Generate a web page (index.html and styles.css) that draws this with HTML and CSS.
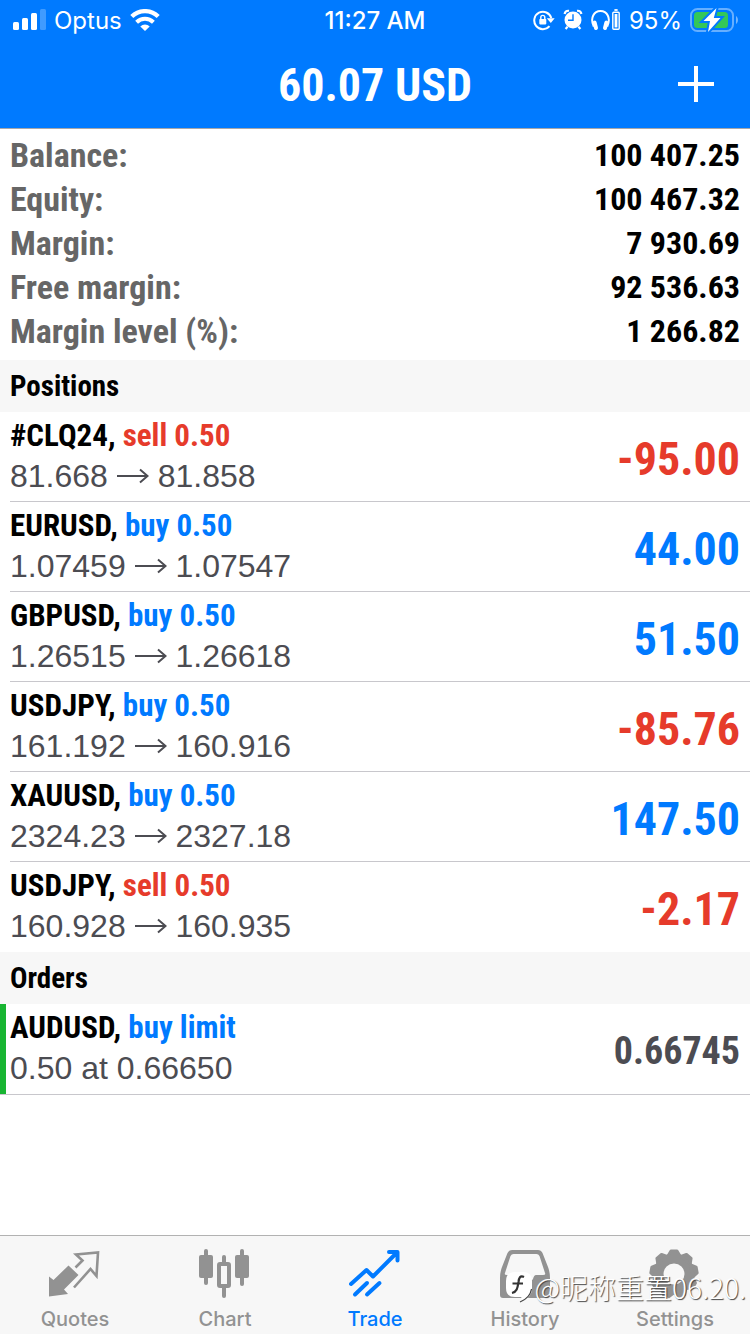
FILE: index.html
```html
<!DOCTYPE html>
<html lang="en">
  <head>
    <meta charset="UTF-8" />
    <meta name="viewport" content="width=device-width, initial-scale=1.0" />
    <title>Trade</title>
    <link rel="stylesheet" href="styles.css">
  </head>
  <body>
    <header class="header">
      <!-- Status bar -->
      <div class="status-bar">
        <div class="status-left">
          <svg width="34" height="22" viewBox="0 0 34 22" fill="#fff">
            <rect x="1" y="13" width="6" height="8" rx="1.5" />
            <rect x="10" y="9" width="6" height="12" rx="1.5" />
            <rect x="19" y="4" width="6" height="17" rx="1.5" />
            <rect x="28" y="0" width="6" height="21" rx="1.5" opacity="0.25" />
          </svg>
          <span>Optus</span>
          <svg width="30" height="22" viewBox="0 0 30 22" fill="none" stroke="#fff" stroke-width="4.4">
            <path d="M1.8 7.5 A19 19 0 0 1 28.2 7.5" />
            <path d="M6.6 13.3 A12 12 0 0 1 23.4 13.3" stroke-width="4" />
            <path d="M15 22 L10.3 17.4 A7 7 0 0 1 19.7 17.4 Z" fill="#fff" stroke="none" />
          </svg>
        </div>
        <div class="status-time">11:27 AM</div>
        <div class="status-right">
          <svg width="22" height="22" viewBox="0 0 22 22" fill="none" stroke="#fff" stroke-width="2">
            <path d="M16.5 17.2 A8.7 8.7 0 1 1 18.3 9" />
            <path d="M13.8 9.3 H21.7 L17.8 14 Z" fill="#fff" stroke="none" />
            <rect x="6.3" y="10" width="7" height="5.4" rx="0.8" fill="#fff" stroke="none" />
            <path d="M7.8 10.5 V8.4 a2 2 0 0 1 4 0 V10.5" stroke-width="1.4" />
          </svg>
          <svg width="20" height="22" viewBox="0 0 20 22">
            <circle cx="10" cy="11" r="8.5" fill="#fff" />
            <path d="M1.6 5 A4 4 0 0 1 6 1.8 M14 1.8 A4 4 0 0 1 18.4 5 M4.6 17.6 L2.6 20 M15.4 17.6 L17.4 20" fill="none" stroke="#fff" stroke-width="2.2" />
            <path d="M10 5.2 V11.2 H5" fill="none" stroke="#007aff" stroke-width="1.4" />
          </svg>
          <svg width="30" height="22" viewBox="0 0 30 22" fill="none" stroke="#fff">
            <path d="M2.8 17.6 C-1.4 8.5 3.2 2.1 9.5 2.1 S20.4 8.5 16.2 17.6" stroke-width="2" />
            <path d="M3.6 13.6 L5 19 M15.4 13.6 L14 19" stroke-width="4" stroke-linecap="round" />
            <rect x="21.8" y="3.2" width="6.4" height="17" rx="1" stroke-width="1.4" />
            <path d="M23.4 1 H26.6" stroke-width="1.8" />
            <rect x="23.6" y="5" width="2.8" height="13.4" fill="#fff" stroke="none" />
          </svg>
          <span>95%</span>
          <svg width="48" height="24" viewBox="0 0 48 24">
            <rect x="1" y="1" width="42" height="22" rx="6.5" fill="none" stroke="#fff" stroke-opacity="0.4" stroke-width="2" />
            <path d="M46 8 C48.6 9.4 48.6 14.6 46 16 Z" fill="#fff" opacity="0.45" />
            <rect x="4" y="4" width="34" height="16" rx="3.5" fill="#34c759" />
            <path d="M26.5 0 L13.5 13 H20 L18 24 L30.5 10 H23.8 Z" fill="#fff" stroke="#007aff" stroke-width="4" paint-order="stroke" />
          </svg>
        </div>
      </div>

      <div class="title-bar">
        <h1>60.07 USD</h1>
        <button class="add-button" type="button" aria-label="New order">
          <svg width="36" height="36" viewBox="0 0 36 36" stroke="#fff" stroke-width="4">
            <path d="M18 0 V36 M0 18 H36" />
          </svg>
        </button>
      </div>
    </header>

    <main class="content">
      <!-- Account summary -->
      <dl class="account">
        <div class="account-row"><dt>Balance:</dt><dd>100 407.25</dd></div>
        <div class="account-row"><dt>Equity:</dt><dd>100 467.32</dd></div>
        <div class="account-row"><dt>Margin:</dt><dd>7 930.69</dd></div>
        <div class="account-row"><dt>Free margin:</dt><dd>92 536.63</dd></div>
        <div class="account-row"><dt>Margin level (%):</dt><dd>1 266.82</dd></div>
      </dl>

      <h2 class="section-title">Positions</h2>
      <ul class="trade-list">
        <li class="trade">
          <div class="trade-info">
            <p class="trade-symbol">#CLQ24, <span class="sell">sell 0.50</span></p>
            <p class="trade-price">81.668 <svg class="arrow" viewBox="0 0 32 16"><path d="M0 8 H30 M23 1.5 L30.5 8 L23 14.5" /></svg> 81.858</p>
          </div>
          <span class="trade-value sell">-95.00</span>
        </li>
        <li class="trade">
          <div class="trade-info">
            <p class="trade-symbol">EURUSD, <span class="buy">buy 0.50</span></p>
            <p class="trade-price">1.07459 <svg class="arrow" viewBox="0 0 32 16"><path d="M0 8 H30 M23 1.5 L30.5 8 L23 14.5" /></svg> 1.07547</p>
          </div>
          <span class="trade-value buy">44.00</span>
        </li>
        <li class="trade">
          <div class="trade-info">
            <p class="trade-symbol">GBPUSD, <span class="buy">buy 0.50</span></p>
            <p class="trade-price">1.26515 <svg class="arrow" viewBox="0 0 32 16"><path d="M0 8 H30 M23 1.5 L30.5 8 L23 14.5" /></svg> 1.26618</p>
          </div>
          <span class="trade-value buy">51.50</span>
        </li>
        <li class="trade">
          <div class="trade-info">
            <p class="trade-symbol">USDJPY, <span class="buy">buy 0.50</span></p>
            <p class="trade-price">161.192 <svg class="arrow" viewBox="0 0 32 16"><path d="M0 8 H30 M23 1.5 L30.5 8 L23 14.5" /></svg> 160.916</p>
          </div>
          <span class="trade-value sell">-85.76</span>
        </li>
        <li class="trade">
          <div class="trade-info">
            <p class="trade-symbol">XAUUSD, <span class="buy">buy 0.50</span></p>
            <p class="trade-price">2324.23 <svg class="arrow" viewBox="0 0 32 16"><path d="M0 8 H30 M23 1.5 L30.5 8 L23 14.5" /></svg> 2327.18</p>
          </div>
          <span class="trade-value buy">147.50</span>
        </li>
        <li class="trade">
          <div class="trade-info">
            <p class="trade-symbol">USDJPY, <span class="sell">sell 0.50</span></p>
            <p class="trade-price">160.928 <svg class="arrow" viewBox="0 0 32 16"><path d="M0 8 H30 M23 1.5 L30.5 8 L23 14.5" /></svg> 160.935</p>
          </div>
          <span class="trade-value sell">-2.17</span>
        </li>
      </ul>

      <h2 class="section-title">Orders</h2>
      <ul class="order-list">
        <li class="trade order">
          <div class="trade-info">
            <p class="trade-symbol">AUDUSD, <span class="buy">buy limit</span></p>
            <p class="trade-price">0.50 at 0.66650</p>
          </div>
          <span class="trade-value order-value">0.66745</span>
        </li>
      </ul>
    </main>

    <!-- Tab bar -->
    <nav class="tab-bar">
      <a class="tab" href="#quotes">
        <svg width="52" height="50" viewBox="0 0 52 50">
          <path d="M0 27.5 L4.5 31 L19.5 16.5 L29.5 26 L15 40.5 L19 45 L0 47.5 Z" fill="currentColor" />
          <path d="M26.5 18.5 L33.5 11.5 L27 5.5 L49 3.5 L47.5 27 L41.5 20 L25 38.5" fill="none" stroke="currentColor" stroke-width="2.6" />
        </svg>
        <span>Quotes</span>
      </a>
      <a class="tab" href="#chart">
        <svg width="52" height="50" viewBox="0 0 52 50" fill="currentColor">
          <rect x="0" y="6" width="14" height="23" rx="2" />
          <rect x="5" y="0" width="4" height="36" rx="2" />
          <rect x="36" y="6" width="14" height="23" rx="2" />
          <rect x="41" y="0" width="4" height="37" rx="2" />
          <rect x="23" y="6" width="4" height="9" rx="2" />
          <rect x="23" y="37" width="4" height="12" rx="2" />
          <rect x="20" y="15" width="10" height="22" rx="1" fill="none" stroke="currentColor" stroke-width="4" />
        </svg>
        <span>Chart</span>
      </a>
      <a class="tab active" href="#trade" aria-current="page">
        <svg width="52" height="50" viewBox="0 0 52 50" fill="none" stroke="currentColor" stroke-width="4" stroke-linecap="round" stroke-linejoin="round">
          <path d="M2 35 L17.5 21 L24 27.5 L47 4.5 M40 3 H48.5 V11.5" />
          <path d="M6 45.5 L18 34 M18 45.5 L30.5 34" />
        </svg>
        <span>Trade</span>
      </a>
      <a class="tab" href="#history">
        <svg width="52" height="50" viewBox="0 0 52 50">
          <path fill="currentColor" fill-rule="evenodd" d="M13 1 H39 Q42 1 43.5 4 L49 18 Q51 23 51 29 V46 Q51 49 48 49 H4 Q1 49 1 46 V29 Q1 23 3 18 L8.5 4 Q10 1 13 1 Z M14.5 5 Q12.5 5 11.5 7 L6 24 Q5 26 8 26 H15 Q17 26 18 30 Q19 32 21 32 H31 Q33 32 34 30 Q35 26 37 26 H44 Q47 26 46 24 L40.5 7 Q39.5 5 37.5 5 Z" />
        </svg>
        <span>History</span>
      </a>
      <a class="tab" href="#settings">
        <svg width="52" height="50" viewBox="0 0 52 50">
          <circle cx="25" cy="25" r="15.5" fill="none" stroke="currentColor" stroke-width="10" />
          <g fill="currentColor" stroke="currentColor" stroke-width="3" stroke-linejoin="round">
            <path id="tooth" d="M19 7 L22 2 H28 L31 7 Z" />
            <use href="#tooth" transform="rotate(40 25 25)" />
            <use href="#tooth" transform="rotate(80 25 25)" />
            <use href="#tooth" transform="rotate(120 25 25)" />
            <use href="#tooth" transform="rotate(160 25 25)" />
            <use href="#tooth" transform="rotate(200 25 25)" />
            <use href="#tooth" transform="rotate(240 25 25)" />
            <use href="#tooth" transform="rotate(280 25 25)" />
            <use href="#tooth" transform="rotate(320 25 25)" />
          </g>
        </svg>
        <span>Settings</span>
      </a>

      <div class="watermark">
        <svg width="26" height="32" viewBox="0 0 26 32">
          <path d="M9 1 H17 Q26 1 26 10 V17 Q26 27 14 31 C16 29 16 27 15 26 H9 Q0 26 0 17 V10 Q0 1 9 1 Z" fill="#fff" />
          <path d="M25.5 18 Q24 27 14 31" fill="none" stroke="#444" stroke-width="1.2" />
          <path d="M18 6 C14 4 13 7 12.5 11 C11.5 17 11 21 6 22 M6.5 12.5 H17" fill="none" stroke="#333" stroke-width="2.2" />
        </svg>
        <span>@昵称重置06.20.</span>
      </div>
    </nav>
  </body>
</html>
```
FILE: styles.css
```css
* {
  box-sizing: border-box;
}

body {
  display: flex;
  flex-direction: column;
  min-height: 100vh;
  margin: 0;
  background-color: #fff;
  color: #000;
  font-family: "Roboto Condensed", "Liberation Sans Narrow", "Liberation Sans", Arial, sans-serif;
}

h1,
h2,
p,
dl,
dd,
ul {
  margin: 0;
  padding: 0;
}

ul {
  list-style: none;
}

/* Header */
.header {
  background-color: #007aff;
  color: #fff;
  border-bottom: 1px solid #a7a7aa;
}

.status-bar {
  display: grid;
  grid-template-columns: 1fr auto 1fr;
  align-items: center;
  height: 40px;
  padding: 0 12px;
  font-family: Inter, sans-serif;
  font-size: 24px;
}

.status-left,
.status-right {
  display: flex;
  align-items: center;
  gap: 8px;
}

.status-right {
  justify-content: flex-end;
}

.status-time {
  font-weight: 500;
}

.title-bar {
  display: grid;
  grid-template-columns: 1fr auto 1fr;
  align-items: center;
  height: 88px;
  padding: 0 36px;
}

.title-bar h1 {
  grid-column: 2;
  padding-top: 2px;
  font-size: 46px;
  line-height: 56px;
}

.add-button {
  display: flex;
  justify-self: end;
  padding: 0;
  border: none;
  background: none;
  cursor: pointer;
}

/* Account summary */
.account {
  padding: 4px 10px 7px;
  font-weight: bold;
  line-height: 44px;
}

.account-row {
  display: flex;
  justify-content: space-between;
}

.account dt {
  color: #666;
  font-size: 34px;
}

.account dd {
  font-size: 32px;
}

.section-title {
  padding: 0 10px;
  background-color: #f7f7f7;
  font-size: 29px;
  line-height: 52px;
}

/* Positions and orders */
.trade {
  display: flex;
  align-items: center;
  justify-content: space-between;
  height: 90px;
  margin-left: 10px;
  padding-right: 10px;
  border-bottom: 1px solid #c8c7cc;
}

.trade-list .trade:last-child {
  border-bottom-color: transparent;
}

.trade-info {
  padding-bottom: 2px;
}

.trade-symbol {
  font-size: 31px;
  font-weight: bold;
  line-height: 40px;
}

.trade-price {
  color: #4c4c52;
  font-family: "Liberation Sans", Arial, sans-serif;
  font-size: 32px;
  line-height: 40px;
}

.arrow {
  width: 32px;
  height: 16px;
  fill: none;
  stroke: #4c4c52;
  stroke-width: 2;
  vertical-align: 3px;
}

.trade-value {
  padding-top: 4px;
  font-size: 46px;
  font-weight: bold;
}

.buy {
  color: #007aff;
}

.sell {
  color: #e63b2b;
}

.order-list {
  border-bottom: 1px solid #c8c7cc;
}

.order {
  margin-left: 0;
  padding-left: 4px;
  border-bottom: none;
  border-left: 6px solid #18b532;
}

.order-value {
  color: #4c4c52;
  font-size: 38px;
}

/* Tab bar */
.tab-bar {
  position: relative;
  display: flex;
  height: 99px;
  margin-top: auto;
  border-top: 1px solid #b2b2b2;
  background-color: #f7f7f7;
}

.tab {
  display: flex;
  flex: 1;
  flex-direction: column;
  align-items: center;
  gap: 8px;
  padding-top: 13px;
  color: #929292;
  font-family: Inter, sans-serif;
  font-size: 20px;
  font-weight: 500;
  line-height: 24px;
  text-decoration: none;
}

.tab.active {
  color: #007aff;
}

.watermark {
  position: absolute;
  right: 4px;
  top: 33px;
  display: flex;
  align-items: center;
  gap: 3px;
  color: #fff;
  font-family: "Noto Sans CJK SC", sans-serif;
  font-size: 28px;
  font-weight: 300;
  line-height: 36px;
  text-shadow: 1px 1px 1px #444;
  white-space: nowrap;
}
```
